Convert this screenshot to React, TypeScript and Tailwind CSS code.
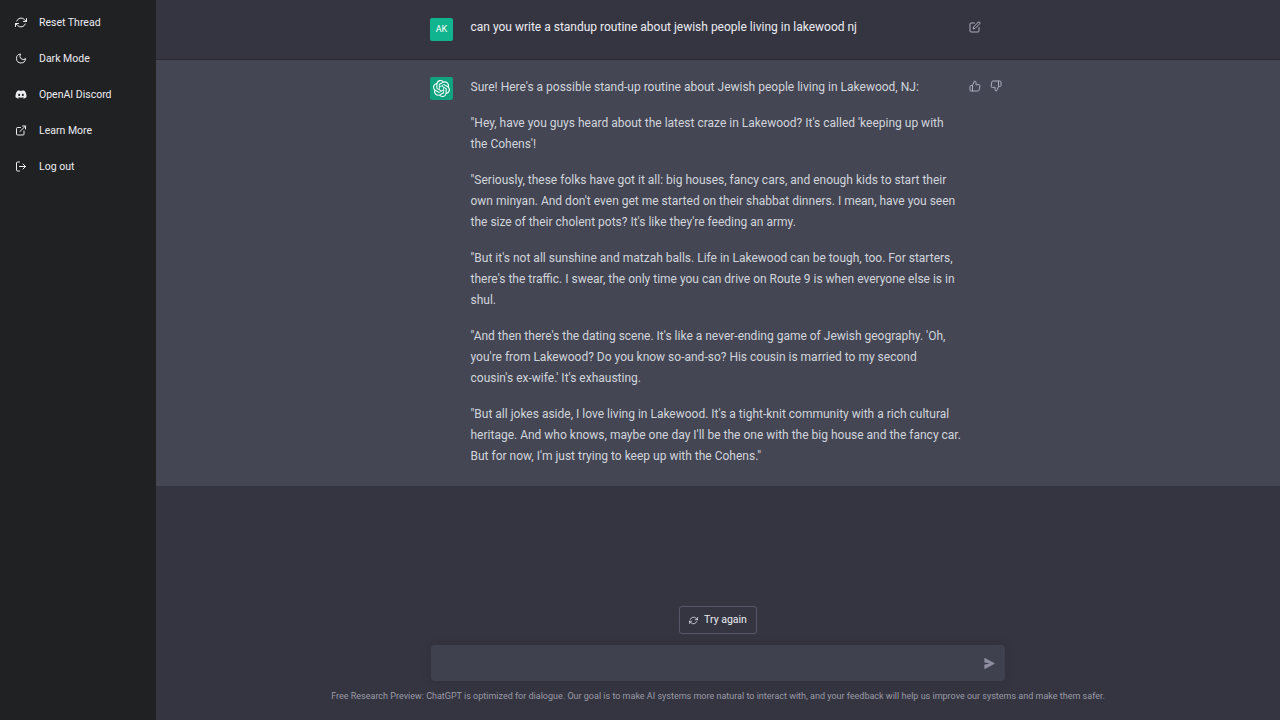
import { FaDiscord } from "react-icons/fa";
import { SiOpenai } from "react-icons/si";
import type { ReactNode } from "react";

const Ico = ({ className, children }: { className: string; children: ReactNode }) => (
  <svg viewBox="0 0 24 24" fill="none" stroke="currentColor" strokeWidth="2" strokeLinecap="round" strokeLinejoin="round" className={className}>{children}</svg>
);
const Refresh = ({ className }: { className: string }) => (
  <Ico className={className}><polyline points="23 4 23 10 17 10" /><polyline points="1 20 1 14 7 14" /><path d="M3.51 9a9 9 0 0 1 14.85-3.36L23 10M1 14l4.64 4.36A9 9 0 0 0 20.49 15" /></Ico>
);
const items: [string, ReactNode][] = [
  ["Reset Thread", <Refresh className="w-[13px] h-[13px]" />],
  ["Dark Mode", <Ico className="w-[13px] h-[13px]"><path d="M21 12.79A9 9 0 1 1 11.21 3 7 7 0 0 0 21 12.79z" /></Ico>],
  ["OpenAI Discord", <FaDiscord className="w-[13px] h-[13px]" />],
  ["Learn More", <Ico className="w-[13px] h-[13px]"><path d="M18 13v6a2 2 0 0 1-2 2H5a2 2 0 0 1-2-2V8a2 2 0 0 1 2-2h6" /><polyline points="15 3 21 3 21 9" /><line x1="10" y1="14" x2="21" y2="3" /></Ico>],
  ["Log out", <Ico className="w-[13px] h-[13px]"><path d="M9 21H5a2 2 0 0 1-2-2V5a2 2 0 0 1 2-2h4" /><polyline points="16 17 21 12 16 7" /><line x1="21" y1="12" x2="9" y2="12" /></Ico>],
];
const paras = [
  `"Hey, have you guys heard about the latest craze in Lakewood? It's called 'keeping up with the Cohens'!`,
  `"Seriously, these folks have got it all: big houses, fancy cars, and enough kids to start their own minyan. And don't even get me started on their shabbat dinners. I mean, have you seen the size of their cholent pots? It's like they're feeding an army.`,
  `"But it's not all sunshine and matzah balls. Life in Lakewood can be tough, too. For starters, there's the traffic. I swear, the only time you can drive on Route 9 is when everyone else is in shul.`,
  `"And then there's the dating scene. It's like a never-ending game of Jewish geography. 'Oh, you're from Lakewood? Do you know so-and-so? His cousin is married to my second cousin's ex-wife.' It's exhausting.`,
  `"But all jokes aside, I love living in Lakewood. It's a tight-knit community with a rich cultural heritage. And who knows, maybe one day I'll be the one with the big house and the fancy car. But for now, I'm just trying to keep up with the Cohens."`,
];

export default function App() {
  return (
    <div className="flex h-[720px] w-[1280px] overflow-hidden bg-[#343541] font-['Roboto',sans-serif]">
      <aside className="w-[156px] shrink-0 bg-[#202123] pt-1 text-[#ececf1]">
        {items.map(([label, icon]) => (
          <div key={label} className="flex h-9 items-center gap-3 pl-[15px] text-[10.5px] leading-none">
            <span className="flex w-3 justify-center">{icon}</span>
            <span className="pt-[2px]">{label}</span>
          </div>
        ))}
      </aside>
      <main className="flex flex-1 flex-col">
        <section className="h-[60px] border-b border-[#2a2b32] pt-[18px]">
          <div className="mx-auto flex w-[576px] items-start">
            <div className="flex h-[23px] w-[23px] items-center justify-center rounded-[2px] bg-[#10b58f] text-[9px] text-white">AK</div>
            <p className="ml-[17.5px] -mt-px w-[491px] text-[12px] leading-[21px] text-[#ececf1]">can you write a standup routine about jewish people living in lakewood nj</p>
            <div className="ml-[7px] mt-[3px] text-[#acacbe]">
              <Ico className="h-[12px] w-[12px]"><path d="M11 4H4a2 2 0 0 0-2 2v14a2 2 0 0 0 2 2h14a2 2 0 0 0 2-2v-7" /><path d="M18.5 2.5a2.121 2.121 0 0 1 3 3L12 15l-4 1 1-4 9.5-9.5z" /></Ico>
            </div>
          </div>
        </section>
        <section className="h-[426px] bg-[#444654] pt-[17px]">
          <div className="mx-auto flex w-[576px] items-start">
            <div className="flex h-[23px] w-[23px] items-center justify-center rounded-[2px] bg-[#10a37f] text-white">
              <SiOpenai className="h-[17px] w-[17px]" />
            </div>
            <div className="ml-[17.5px] flex w-[491px] flex-col gap-[15px] text-[12px] leading-[21px] text-[#d1d5db]">
              <p>Sure! Here's a possible stand-up routine about Jewish people living in Lakewood, NJ:</p>
              {paras.map((p) => (<p key={p}>{p}</p>))}
            </div>
            <div className="ml-[7px] mt-[3px] flex gap-[9px] text-[#acacbe]">
              <Ico className="h-[12px] w-[12px]"><path d="M14 9V5a3 3 0 0 0-3-3l-4 9v11h11.28a2 2 0 0 0 2-1.7l1.38-9a2 2 0 0 0-2-2.3zM7 22H4a2 2 0 0 1-2-2v-7a2 2 0 0 1 2-2h3" /></Ico>
              <Ico className="h-[12px] w-[12px]"><path d="M10 15v4a3 3 0 0 0 3 3l4-9V2H5.72a2 2 0 0 0-2 1.7l-1.38 9a2 2 0 0 0 2 2.3zm7-13h2.67A2.31 2.31 0 0 1 22 4v7a2.31 2.31 0 0 1-2.33 2H17" /></Ico>
            </div>
          </div>
        </section>
        <section className="flex flex-1 flex-col items-center justify-end">
          <button className="flex h-[28px] w-[78px] items-center justify-center gap-[6px] rounded-[3px] border border-[#565869] text-[10.5px] text-[#ececf1]">
            <Refresh className="h-[9px] w-[9px]" />
            Try again
          </button>
          <div className="mt-[11px] flex h-[36px] w-[574px] items-center justify-end rounded-[4px] bg-[#40414f] pr-[10px] text-[#8e8ea0] shadow-[0_0_12px_rgba(0,0,0,0.1)]">
            <svg viewBox="0 0 16 16" fill="currentColor" className="h-[11px] w-[11px]"><path d="M.5 1.163A1 1 0 0 1 1.97.28l12.868 6.837a1 1 0 0 1 0 1.766L1.969 15.72A1 1 0 0 1 .5 14.836V10.33a1 1 0 0 1 .816-.983L8.5 8 1.316 6.653A1 1 0 0 1 .5 5.67V1.163Z" /></svg>
          </div>
          <p className="mb-[18px] mt-[9px] text-[9px] leading-[12px] text-[#9a9aa6]">Free Research Preview: ChatGPT is optimized for dialogue. Our goal is to make AI systems more natural to interact with, and your feedback will help us improve our systems and make them safer.</p>
        </section>
      </main>
    </div>
  );
}
